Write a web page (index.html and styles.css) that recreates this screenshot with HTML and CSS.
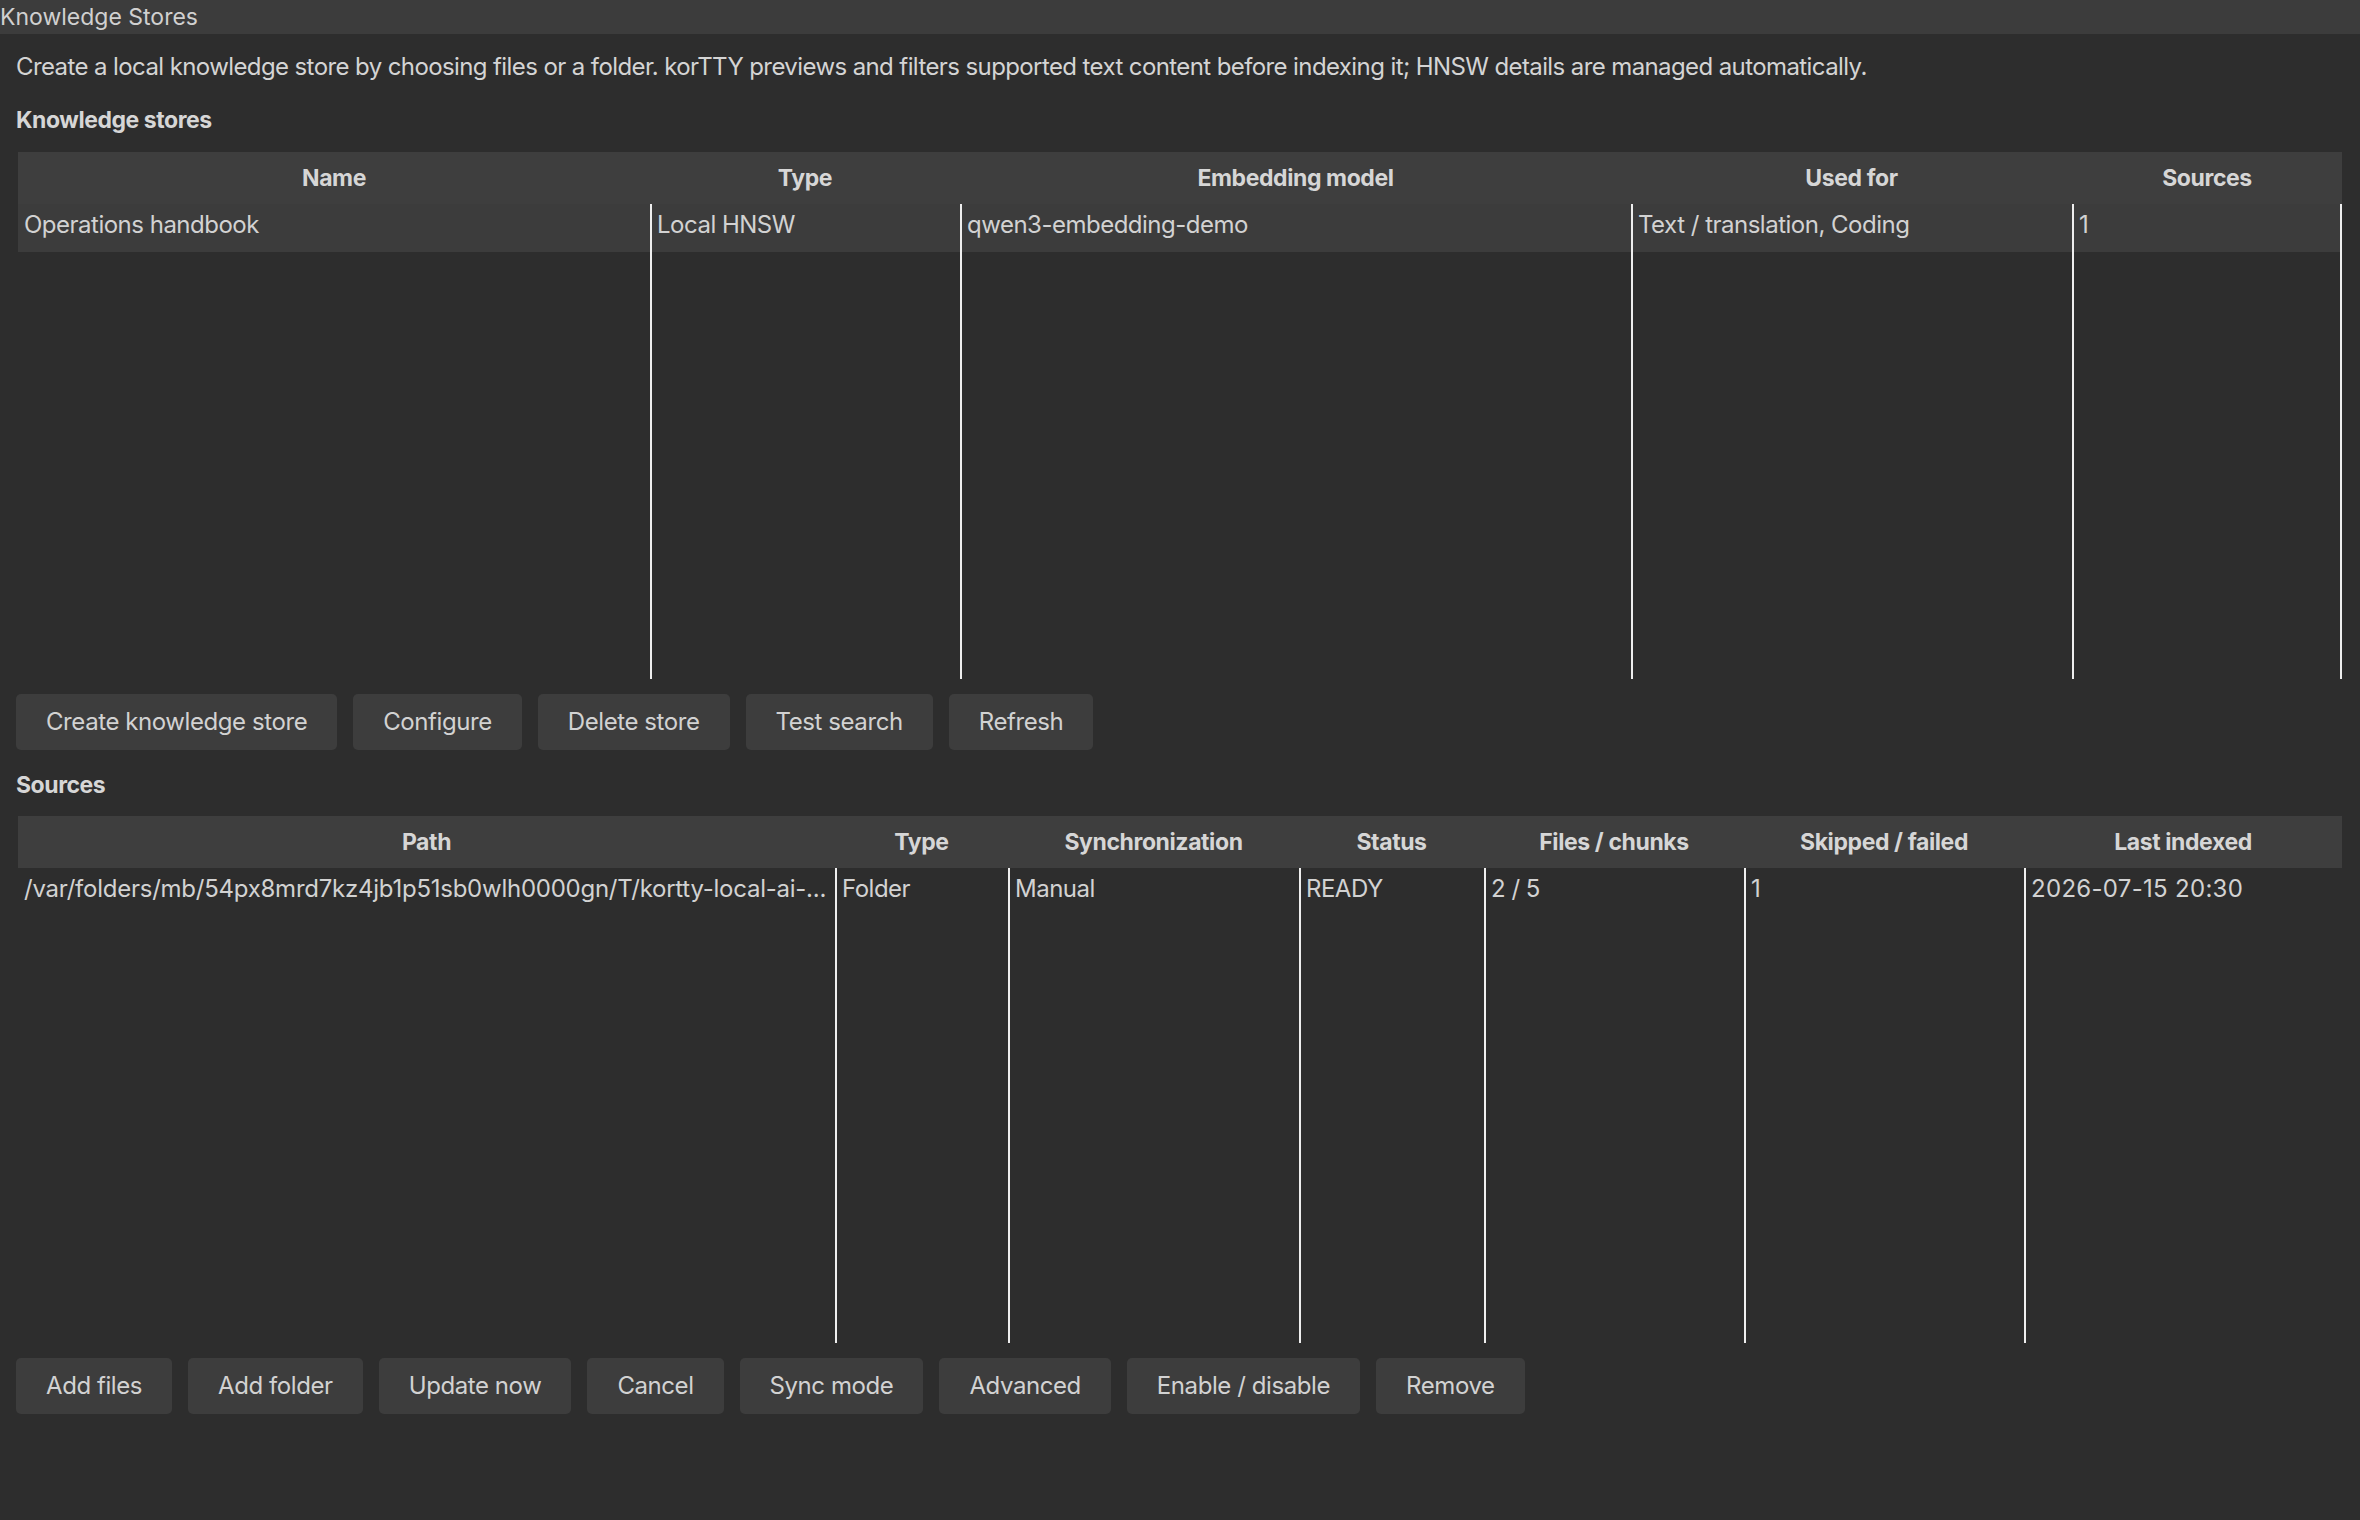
FILE: index.html
```html
<!DOCTYPE html>
<html lang="en">
<head>
<meta charset="utf-8">
<title>Knowledge Stores</title>
<link rel="stylesheet" href="styles.css">
</head>
<body>
<div class="titlebar">Knowledge Stores</div>
<main class="content">
  <p class="desc">Create a local knowledge store by choosing files or a folder. korTTY previews and filters supported text content before indexing it; HNSW details are managed automatically.</p>

  <h2 class="section">Knowledge stores</h2>
  <div class="table stores">
    <div class="thead">
      <div class="th">Name</div>
      <div class="th">Type</div>
      <div class="th">Embedding model</div>
      <div class="th">Used for</div>
      <div class="th">Sources</div>
    </div>
    <div class="tbody">
      <div class="col"><div class="td sel">Operations handbook</div></div>
      <div class="col line"><div class="td sel">Local HNSW</div></div>
      <div class="col line"><div class="td sel">qwen3-embedding-demo</div></div>
      <div class="col line"><div class="td sel">Text / translation, Coding</div></div>
      <div class="col line end"><div class="td sel">1</div></div>
    </div>
  </div>
  <div class="buttons">
    <button class="btn">Create knowledge store</button>
    <button class="btn">Configure</button>
    <button class="btn">Delete store</button>
    <button class="btn">Test search</button>
    <button class="btn">Refresh</button>
  </div>

  <h2 class="section">Sources</h2>
  <div class="table sources">
    <div class="thead">
      <div class="th">Path</div>
      <div class="th">Type</div>
      <div class="th">Synchronization</div>
      <div class="th">Status</div>
      <div class="th">Files / chunks</div>
      <div class="th">Skipped / failed</div>
      <div class="th">Last indexed</div>
    </div>
    <div class="tbody">
      <div class="col"><div class="td path">/var/folders/mb/54px8mrd7kz4jb1p51sb0wlh0000gn/T/kortty-local-ai-...</div></div>
      <div class="col line"><div class="td">Folder</div></div>
      <div class="col line"><div class="td">Manual</div></div>
      <div class="col line"><div class="td">READY</div></div>
      <div class="col line"><div class="td">2 / 5</div></div>
      <div class="col line"><div class="td">1</div></div>
      <div class="col line"><div class="td date">2026-07-15 20:30</div></div>
    </div>
  </div>
  <div class="buttons">
    <button class="btn">Add files</button>
    <button class="btn">Add folder</button>
    <button class="btn">Update now</button>
    <button class="btn">Cancel</button>
    <button class="btn">Sync mode</button>
    <button class="btn">Advanced</button>
    <button class="btn">Enable / disable</button>
    <button class="btn">Remove</button>
  </div>
</main>
</body>
</html>
```
FILE: styles.css
```css
* { box-sizing: border-box; }

html, body {
  margin: 0;
  padding: 0;
  background: #2d2d2d;
  color: #d2d2d2;
  font-family: Inter, "Noto Sans", "Liberation Sans", sans-serif;
  height: 100%;
}

body { overflow: hidden; }

.titlebar {
  height: 34px;
  background: #3c3c3c;
  font-size: 23px;
  line-height: 34px;
  padding-left: 0;
  color: #d0d0d0;
  white-space: nowrap;
}

.content {
  padding: 0 18px 0 16px;
}

.desc {
  margin: 15px 0 0 0;
  font-size: 24px;
  line-height: 36px;
  letter-spacing: -0.6px;
  white-space: nowrap;
  color: #d4d4d4;
}

.section {
  margin: 17px 0 0 0;
  font-size: 23px;
  font-weight: 700;
  line-height: 36px;
  letter-spacing: -0.45px;
  color: #d6d6d6;
}

.table {
  margin: 14px 0 0 2px;
}

.sources { margin-top: 13px; }

.thead, .tbody {
  display: grid;
}

.stores .thead, .stores .tbody {
  grid-template-columns: 632px 310px 671px 441px 270px;
}

.sources .thead, .sources .tbody {
  grid-template-columns: 817px 173px 291px 185px 260px 280px 318px;
}

.thead {
  background: #3e3e3e;
  height: 52px;
}

.th {
  font-size: 23px;
  font-weight: 700;
  line-height: 53px;
  text-align: center;
  letter-spacing: -0.4px;
  color: #d6d6d6;
  white-space: nowrap;
}

.tbody {
  height: 475px;
}

.col {
  min-width: 0;
}

.col.line {
  border-left: 2px solid #eeeeee;
}

.col.line.end {
  border-right: 2px solid #eeeeee;
}

.td {
  height: 48px;
  font-size: 24px;
  line-height: 42px;
  letter-spacing: -0.5px;
  padding: 0 2px 0 5px;
  white-space: nowrap;
  overflow: hidden;
  color: #d2d2d2;
}

.td.path { letter-spacing: -0.25px; }
.td.date { letter-spacing: 0.3px; }

.stores .col:first-child .td,
.sources .col:first-child .td { padding-left: 6px; }

.td.sel {
  background: #3c3c3c;
}

.buttons {
  display: flex;
  gap: 16px;
  margin-top: 15px;
}

.btn {
  height: 56px;
  padding: 0 30px;
  border: none;
  border-radius: 5px;
  background: #3d3d3d;
  color: #d2d2d2;
  font-family: inherit;
  font-size: 24px;
  line-height: 56px;
  letter-spacing: -0.42px;
  white-space: nowrap;
}
```
